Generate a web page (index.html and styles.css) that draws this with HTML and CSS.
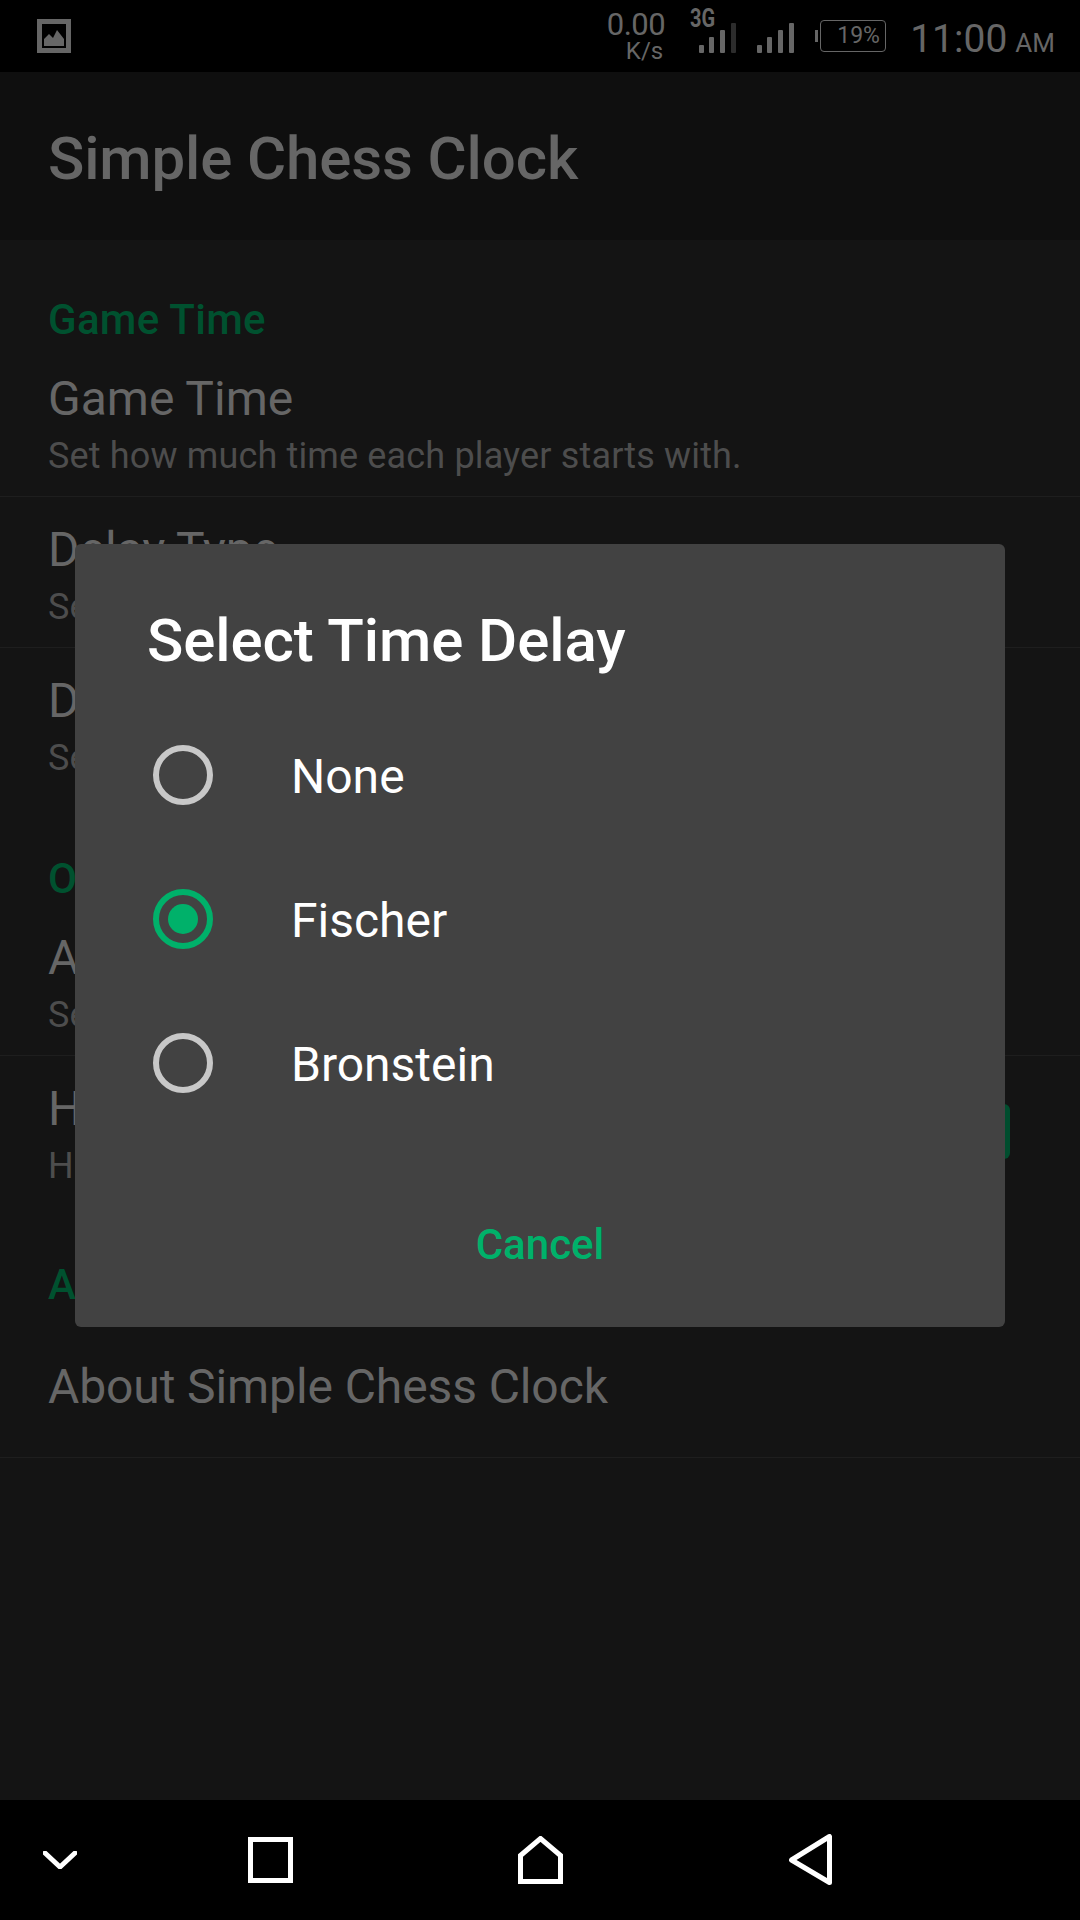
FILE: index.html
```html
<!DOCTYPE html>
<html lang="en">
<head>
    <meta charset="UTF-8">
    <meta name="viewport" content="width=device-width, initial-scale=1.0">
    <title>Simple Chess Clock</title>
    <link rel="stylesheet" href="styles.css">
</head>
<body>
    <div class="screen">
        <div class="status-bar">
            <svg class="photo-icon" width="34" height="34" viewBox="0 0 34 34">
                <path d="M0 0H34V34H0ZM5 5V29H29V5Z" fill-rule="evenodd"/>
                <path d="M7 27V20L12 15L16 19L20 11L27 20V27Z"/>
            </svg>
            <div class="status-right">
                <div class="net-speed">
                    <span class="net-value">0.00</span>
                    <span class="net-unit">K/s</span>
                </div>
                <div class="signal-data">
                    <span class="data-type">3G</span>
                    <svg class="bars" width="37" height="30" viewBox="0 0 37 30">
                        <rect x="0" y="22" width="5" height="8" rx="1"/>
                        <rect x="10" y="14" width="5" height="16" rx="1"/>
                        <rect x="21" y="7" width="5" height="23" rx="1"/>
                        <rect class="bar-off" x="32" y="0" width="5" height="30" rx="1"/>
                    </svg>
                </div>
                <svg class="bars signal-plain" width="37" height="30" viewBox="0 0 37 30">
                    <rect x="0" y="22" width="5" height="8" rx="1"/>
                    <rect x="10" y="14" width="5" height="16" rx="1"/>
                    <rect x="21" y="7" width="5" height="23" rx="1"/>
                    <rect x="32" y="0" width="5" height="30" rx="1"/>
                </svg>
                <div class="battery">
                    <span class="battery-nub"></span>
                    <span class="battery-body">19%</span>
                </div>
                <div class="clock">11:00<span class="clock-ampm">AM</span></div>
            </div>
        </div>

        <div class="app-bar">Simple Chess Clock</div>

        <div class="settings">
            <div class="section">
                <div class="section-title">Game Time</div>
                <div class="row with-line">
                    <div class="row-title">Game Time</div>
                    <div class="row-summary">Set how much time each player starts with.</div>
                </div>
                <div class="row with-line">
                    <div class="row-title">Delay Type</div>
                    <div class="row-summary">Set</div>
                </div>
                <div class="row">
                    <div class="row-title">Delay Time</div>
                    <div class="row-summary">Set delay time.</div>
                </div>
            </div>
            <div class="section">
                <div class="section-title">Other</div>
                <div class="row with-line">
                    <div class="row-title">Alert</div>
                    <div class="row-summary">Set alert.</div>
                </div>
                <div class="row">
                    <div class="row-title">Haptic</div>
                    <div class="row-summary">Haptic feedback.</div>
                    <span class="row-switch"></span>
                </div>
            </div>
            <div class="section section-last">
                <div class="section-title">About</div>
                <div class="row row-single with-line">
                    <div class="row-title about-title">About Simple Chess Clock</div>
                </div>
            </div>
        </div>

        <div class="nav-bar">
            <svg class="nav-down" width="34" height="18" viewBox="0 0 34 18">
                <path d="M2 2L17 16L32 2"/>
            </svg>
            <svg class="nav-recent" width="45" height="46" viewBox="0 0 45 46">
                <rect x="2.500" y="2.500" width="40" height="41"/>
            </svg>
            <svg class="nav-home" width="45" height="48" viewBox="0 0 45 48">
                <path d="M2.500 45.500V19.500L22.500 2.500L42.500 19.500V45.500Z"/>
            </svg>
            <svg class="nav-back" width="43" height="51" viewBox="0 0 43 51">
                <path d="M40.500 2.500V48.500L2.500 26Z"/>
            </svg>
        </div>

        <div class="dialog">
            <div class="dialog-title">Select Time Delay</div>
            <div class="option">
                <span class="radio"></span>
                <span class="option-label">None</span>
            </div>
            <div class="option">
                <span class="radio checked"></span>
                <span class="option-label">Fischer</span>
            </div>
            <div class="option">
                <span class="radio"></span>
                <span class="option-label">Bronstein</span>
            </div>
            <div class="dialog-cancel">Cancel</div>
        </div>
    </div>
</body>
</html>
```

FILE: styles.css
```css
* {
    margin: 0;
    padding: 0;
    box-sizing: border-box;
}

body {
    font-family: Roboto, "Noto Sans", sans-serif;
    background: #141414;
}

.screen {
    position: relative;
    width: 1080px;
    height: 1920px;
    display: flex;
    flex-direction: column;
    overflow: hidden;
}

.status-bar {
    height: 72px;
    background: #000;
    color: #666;
    display: flex;
    align-items: flex-start;
    justify-content: space-between;
    padding: 19px 25px 0 37px;
}

.photo-icon {
    fill: #666;
}

.status-right {
    display: flex;
    align-items: flex-start;
}

.net-speed {
    width: 60px;
    margin-top: -8px;
    display: flex;
    flex-direction: column;
    align-items: flex-end;
}

.net-value {
    font-size: 31px;
    letter-spacing: -0.5px;
    line-height: 28px;
}

.net-unit {
    padding-right: 2px;
    font-size: 24px;
    line-height: 24px;
}

.signal-data {
    position: relative;
    margin: -9px 0 0 34px;
    width: 37px;
    height: 43px;
}

.signal-data svg {
    position: absolute;
    left: 0;
    bottom: 0;
}

.data-type {
    position: absolute;
    left: -9px;
    top: 0;
    font-size: 25px;
    font-weight: 700;
    line-height: 18px;
    transform: scaleX(0.8);
    transform-origin: left center;
}

.bars {
    fill: #666;
}

.bar-off {
    fill: #2c2c2c;
}

.signal-plain {
    margin: 4px 0 0 21px;
}

.battery {
    display: flex;
    align-items: center;
    margin: 1px 0 0 21px;
}

.battery-nub {
    width: 3px;
    height: 12px;
    margin-right: 2px;
    background: #666;
}

.battery-body {
    width: 66px;
    height: 32px;
    border: 1.5px solid #666;
    border-radius: 4px;
    padding-left: 16px;
    font-size: 23px;
    line-height: 29px;
}

.clock {
    margin: -3px 0 0 24px;
    font-size: 39px;
    line-height: 46px;
    white-space: nowrap;
}

.clock-ampm {
    margin-left: 8px;
    font-size: 26px;
}

.app-bar {
    height: 168px;
    background: #0f0f0f;
    color: #666;
    font-size: 60px;
    font-weight: 500;
    letter-spacing: -0.13px;
    line-height: 173px;
    padding-left: 48px;
}

.settings {
    flex: 1;
}

.section {
    padding-top: 52px;
}

.section-last {
    padding-top: 50px;
}

.section-title {
    font-size: 42px;
    font-weight: 500;
    letter-spacing: 0.3px;
    line-height: 53px;
    padding-top: 1px;
    padding-left: 48px;
    color: #00512f;
}

.row {
    position: relative;
    padding: 23px 48px 13px;
    border-bottom: 1px solid transparent;
}

.with-line {
    border-bottom-color: #1e1e1e;
}

.row-single {
    padding-top: 46px;
    padding-bottom: 40px;
}

.row-title {
    font-size: 48px;
    line-height: 60px;
    color: #666;
}

.about-title {
    letter-spacing: -0.1px;
}

.row-summary {
    font-size: 36px;
    letter-spacing: 0.15px;
    line-height: 54px;
    color: #4d4d4d;
}

.row-switch {
    position: absolute;
    top: 48px;
    right: 70px;
    width: 60px;
    height: 55px;
    border-radius: 6px;
    background: #004d2e;
}

.nav-bar {
    height: 120px;
    background: #000;
    position: relative;
}

.nav-bar svg {
    position: absolute;
    fill: none;
    stroke: #fff;
    stroke-width: 5;
}

.nav-down {
    left: 43px;
    top: 51px;
    stroke-linecap: round;
    stroke-linejoin: round;
}

.nav-recent {
    left: 248px;
    top: 37px;
}

.nav-home {
    left: 518px;
    top: 36px;
}

.nav-back {
    left: 789px;
    top: 34px;
    stroke-linejoin: round;
}

.dialog {
    position: absolute;
    left: 75px;
    top: 544px;
    width: 930px;
    height: 783px;
    background: #424242;
    border-radius: 6px;
    padding-top: 61px;
}

.dialog-title {
    font-size: 60px;
    font-weight: 500;
    letter-spacing: -0.07px;
    line-height: 72px;
    color: #fff;
    padding-left: 72px;
    margin-bottom: 26px;
}

.option {
    height: 144px;
    display: flex;
    align-items: center;
    padding-left: 78px;
}

.radio {
    width: 60px;
    height: 60px;
    border: 6px solid #c8c8c8;
    border-radius: 50%;
    display: flex;
    align-items: center;
    justify-content: center;
}

.radio.checked {
    border-color: #00b16a;
}

.radio.checked::after {
    content: "";
    width: 30px;
    height: 30px;
    border-radius: 50%;
    background: #00b16a;
}

.option-label {
    margin-left: 78px;
    padding-top: 2px;
    font-size: 48px;
    color: #fff;
}

.dialog-cancel {
    margin-top: 80px;
    font-size: 42px;
    font-weight: 500;
    line-height: 60px;
    color: #00b16a;
    text-align: center;
}
```
